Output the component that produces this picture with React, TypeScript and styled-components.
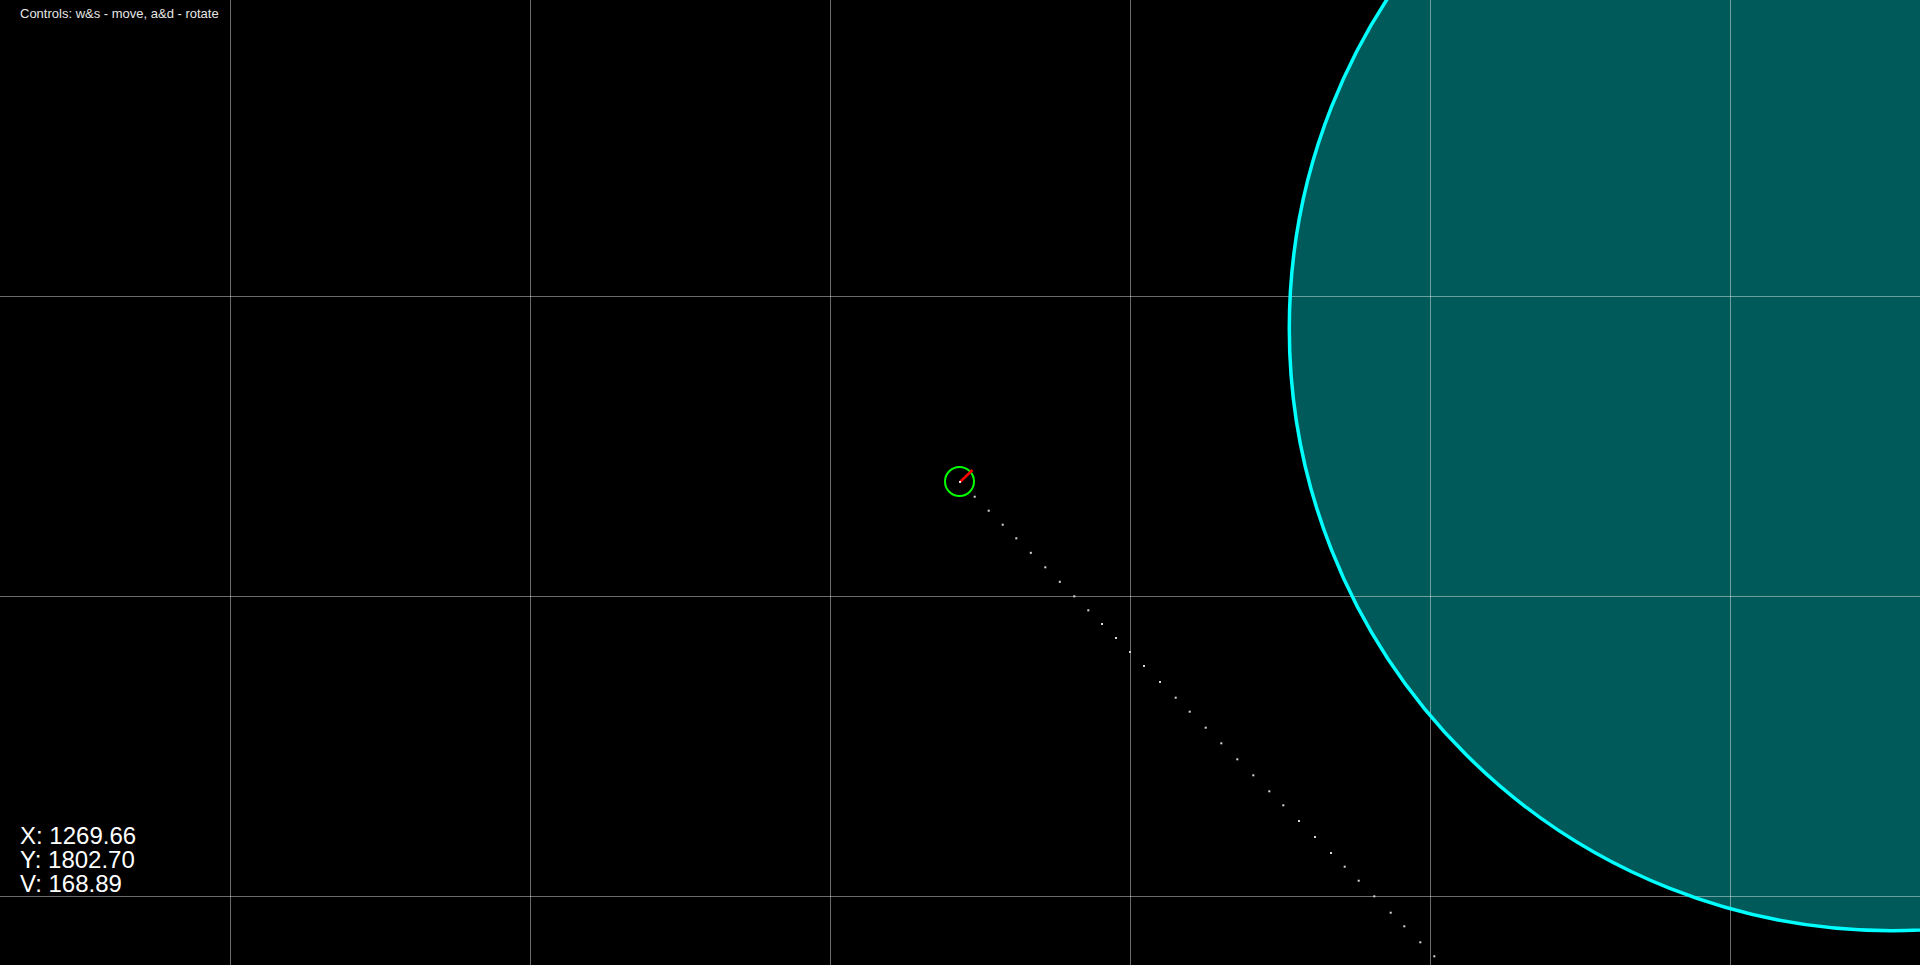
import React from "react";
import styled, { createGlobalStyle } from "styled-components";

const GlobalStyle = createGlobalStyle`
  html, body {
    margin: 0;
    padding: 0;
    background: #000;
    overflow: hidden;
  }
  #root {
    width: 100vw;
    height: 100vh;
  }
`;

const Stage = styled.div`
  position: relative;
  width: 100vw;
  height: 100vh;
  background: #000;
  overflow: hidden;
  font-family: "Liberation Sans", Arial, Helvetica, sans-serif;
`;

const Canvas = styled.svg`
  display: block;
  width: 1920px;
  height: 965px;
`;

const ControlsHint = styled.div`
  position: absolute;
  top: 7px;
  left: 20px;
  font-size: 13px;
  line-height: 14px;
  color: #e6e6e6;
  white-space: nowrap;
`;

const Telemetry = styled.div`
  position: absolute;
  left: 20px;
  bottom: 69px;
  display: flex;
  flex-direction: column;
`;

const TelemetryLine = styled.div`
  font-size: 24px;
  line-height: 24px;
  color: #ffffff;
  white-space: nowrap;
`;

const GRID_X = [230, 530, 830, 1130, 1430, 1730];
const GRID_Y = [296, 596, 896];

const TRAIL_X = [
  974.7, 988.7, 1002.7, 1016.3, 1030.8, 1045.3, 1059.8, 1074.3, 1088.3, 1102,
  1116, 1130, 1144, 1160, 1175.7, 1189.7, 1205.7, 1221.3, 1237.3, 1253.3,
  1269.3, 1283.3, 1299, 1315, 1331, 1344.7, 1358.7, 1374.3, 1390.7, 1404.3,
  1420.3, 1434.3,
];

const telemetry = [
  { label: "X", value: "1269.66" },
  { label: "Y", value: "1802.70" },
  { label: "V", value: "168.89" },
];

export default function App() {
  return (
    <>
      <GlobalStyle />
      <Stage>
        <Canvas viewBox="0 0 1920 965" xmlns="http://www.w3.org/2000/svg">
          <circle cx={1891.6} cy={328.4} r={602.3} fill="#005a5a" />
          <g stroke="rgba(255,255,255,0.42)" strokeWidth={1} shapeRendering="crispEdges">
            {GRID_X.map((x) => (
              <line key={`gx${x}`} x1={x + 0.5} y1={0} x2={x + 0.5} y2={965} />
            ))}
            {GRID_Y.map((y) => (
              <line key={`gy${y}`} x1={0} y1={y + 0.5} x2={1920} y2={y + 0.5} />
            ))}
          </g>
          <circle
            cx={1891.6}
            cy={328.4}
            r={602.3}
            fill="none"
            stroke="#00ffff"
            strokeWidth={3.5}
          />
          <g fill="#d8d8d8">
            {TRAIL_X.map((x, i) => (
              <rect key={i} x={x - 1} y={x - 478 - 1} width={2} height={2} />
            ))}
          </g>
          <circle cx={959.5} cy={481.5} r={14.5} fill="none" stroke="#00ff00" strokeWidth={2} />
          <line x1={960} y1={482} x2={972.5} y2={470} stroke="#ff0000" strokeWidth={2.5} />
          <rect x={959} y={481} width={2} height={2} fill="#e8e8e8" />
        </Canvas>
        <ControlsHint>Controls: w&amp;s - move, a&amp;d - rotate</ControlsHint>
        <Telemetry>
          {telemetry.map((t) => (
            <TelemetryLine key={t.label}>
              {t.label}: {t.value}
            </TelemetryLine>
          ))}
        </Telemetry>
      </Stage>
    </>
  );
}
